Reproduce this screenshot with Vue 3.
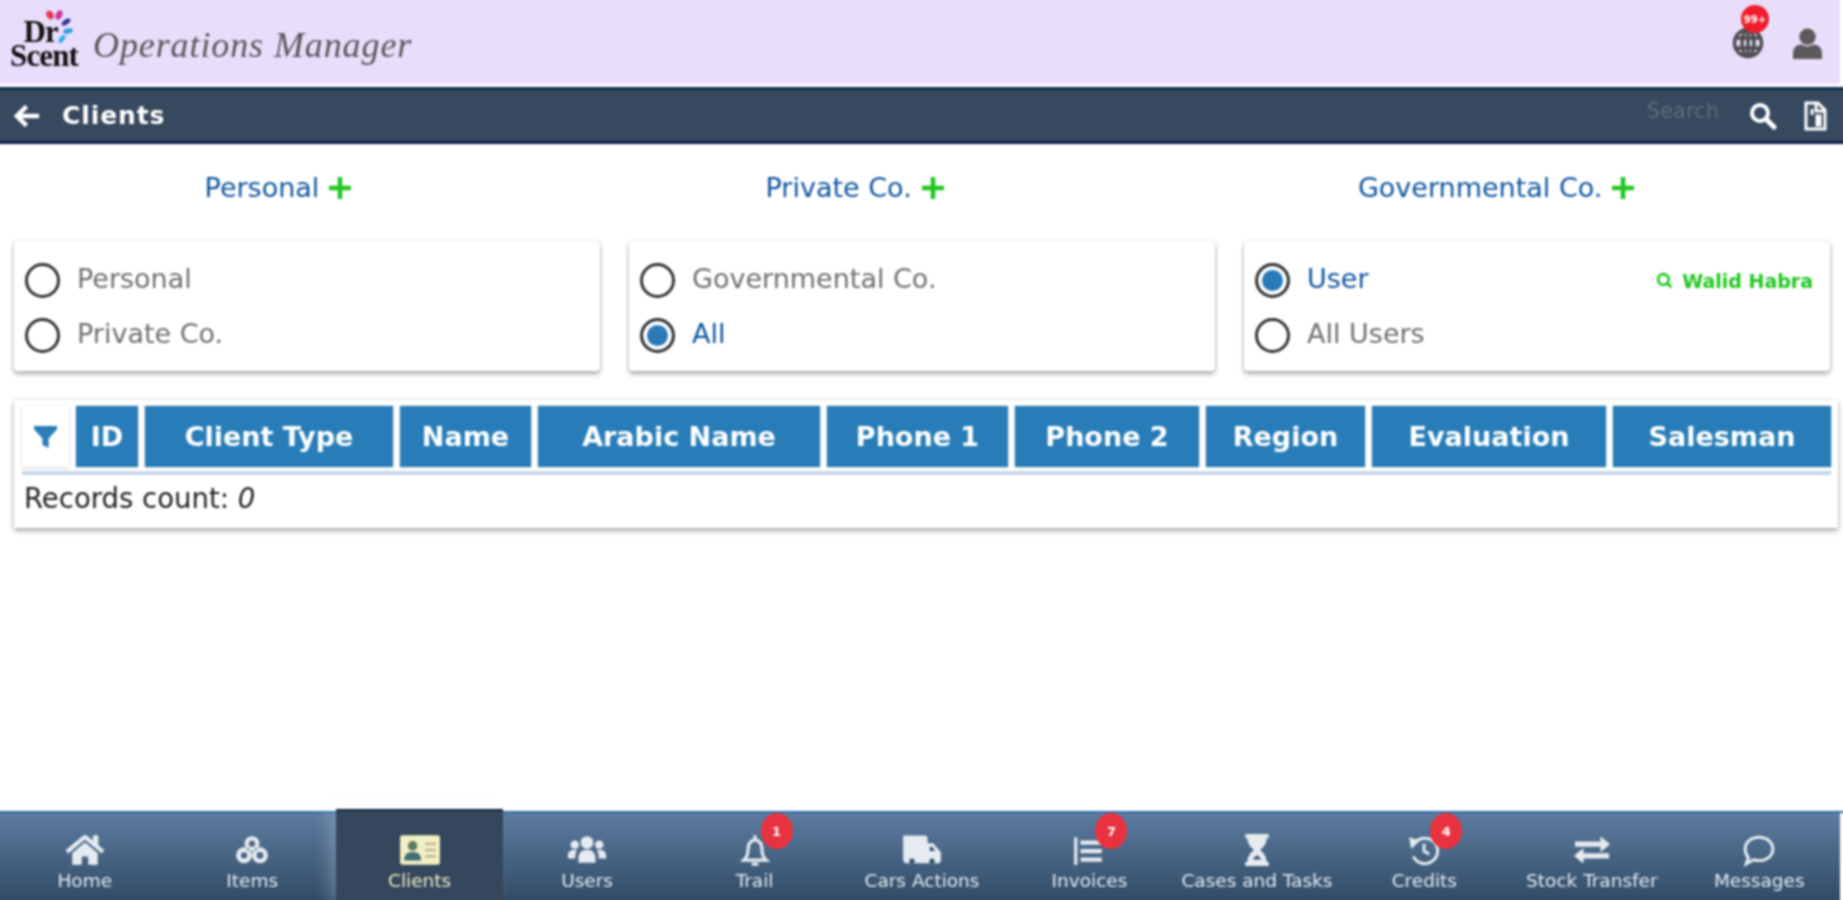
<script setup>
const titles = ['Personal', 'Private Co.', 'Governmental Co.']
const columns = ['ID', 'Client Type', 'Name', 'Arabic Name', 'Phone 1', 'Phone 2', 'Region', 'Evaluation', 'Salesman']
const circle = (x, y, r) => `M${x - r} ${y}a${r} ${r} 0 1 0 ${2 * r} 0a${r} ${r} 0 1 0 ${-2 * r} 0z`
const nav = [
  { label: 'Home', box: '0 0 576 512', d: 'M280.37 148.26L96 300.11V464a16 16 0 0 0 16 16l112.06-.29a16 16 0 0 0 15.92-16V368a16 16 0 0 1 16-16h64a16 16 0 0 1 16 16v95.64a16 16 0 0 0 16 16.05L464 480a16 16 0 0 0 16-16V300L295.67 148.26a12.19 12.19 0 0 0-15.3 0zM571.6 251.47L488 182.56V44.05a12 12 0 0 0-12-12h-56a12 12 0 0 0-12 12v72.61L318.47 43a48 48 0 0 0-61 0L4.34 251.47a12 12 0 0 0-1.6 16.9l25.5 31A12 12 0 0 0 45.15 301l235.22-193.74a12.19 12.19 0 0 1 15.3 0L530.9 301a12 12 0 0 0 16.9-1.6l25.5-31a12 12 0 0 0-1.7-16.93z' },
  { label: 'Items', box: '0 0 32 32', d: circle(16, 10, 7) + circle(16, 10, 3) + circle(8.5, 21, 7.5) + circle(8.5, 21, 3) + circle(23.5, 21, 7.5) + circle(23.5, 21, 3.2) },
  { label: 'Clients', card: true },
  { label: 'Users', box: '0 0 36 32', d: circle(18, 9, 6) + circle(6.5, 11, 4) + circle(29.5, 11, 4) + 'M10 28v-5c0-4 3-7 6-7h4c3 0 6 3 6 7v5zM0 22c0-4 2-6 5-6h4c-1 1-2 3-2 6v2H0zM36 22c0-4-2-6-5-6h-4c1 1 2 3 2 6v2h7z' },
  { label: 'Trail', box: '2 1 28 30', line: 'M6 25c2-2 4-4 4-11 0-4 3-7 6-7s6 3 6 7c0 7 2 9 4 11zM13 28.5h6M16 3v3', badge: '1' },
  { label: 'Cars Actions', box: '2 1 36 28', d: 'M3 2h19c2 0 3 1 3 3v4h5l7 8v7c0 2-1 3-3 3H7c-3 0-4-2-4-4z', dark: circle(11, 25, 2.4) + circle(29, 25, 2.4) + 'M27 12h2l3 4h-5z' },
  { label: 'Invoices', box: '0 0 32 32', d: 'M2 4h3v26H2zM8 7h20v4H8zM8 15h20v4H8zM8 23h20v4H8z', badge: '7' },
  { label: 'Cases and Tasks', box: '0 0 32 32', d: 'M5 1h22v4h-2c0 6-4 9-6 11 2 2 6 5 6 11h2v4H5v-4h2c0-6 4-9 6-11-2-2-6-5-6-11H5z', dark: 'M12 25c1-2 3-3 4-4 1 1 3 2 4 4z' },
  { label: 'Credits', box: '0 0 32 32', line: 'M7 10a12 12 0 1 1-1 12M16 10v7l5 3', d: 'M2 4l10 3-8 8z', badge: '4' },
  { label: 'Stock Transfer', box: '0 0 36 32', d: 'M2 8h24V3l9 7.5L26 18v-5H2zM34 19H10v-5l-9 7.5L10 29v-5h24z' },
  { label: 'Messages', box: '0 0 32 32', line: 'M16 4c7.5 0 13 4.6 13 11s-5.5 11-13 11c-1.800 0-3.500-.3-5-.8L4 29l2-6c-2-2-3-5-3-8C3 8.600 8.500 4 16 4z' }
]
</script>

<template>
  <div class="page">
    <header class="brand">
      <div class="logo">
        <svg class="petals" viewBox="0 0 30 34" aria-hidden="true">
          <ellipse cx="5" cy="6" rx="3.500" ry="4.500" fill="#e63950" transform="rotate(-30 5 6)" />
          <ellipse cx="14" cy="6" rx="3.200" ry="5" fill="#c9359b" transform="rotate(25 14 6)" />
          <ellipse cx="21" cy="13" rx="2.500" ry="5" fill="#35308f" transform="rotate(55 21 13)" />
          <ellipse cx="23" cy="22" rx="2.500" ry="5" fill="#2f9be0" transform="rotate(75 23 22)" />
          <ellipse cx="17" cy="30" rx="2.500" ry="4.500" fill="#2fb0e8" transform="rotate(40 17 30)" />
        </svg>
        <span class="logo-name">Dr&nbsp;<br />Scent</span>
      </div>
      <div class="app-name">Operations Manager</div>
      <div class="brand-icons">
        <div class="globe">
          <svg viewBox="0 0 32 32" class="globe-svg" aria-hidden="true">
            <g fill="none" stroke="#4d4d4d" stroke-width="3.500">
              <circle cx="16" cy="16" r="13.500" />
              <ellipse cx="16" cy="16" rx="6" ry="13.500" />
              <path d="M3 11h26M3 21h26M16 2v28" />
            </g>
          </svg>
          <span class="globe-badge">99+</span>
        </div>
        <svg viewBox="0 0 32 34" class="user-svg" aria-hidden="true">
          <circle cx="16" cy="10" r="8.500" fill="#5b5b5b" />
          <path d="M1 33v-6c0-6 4-9 9-9 2 1 4 2 6 2s4-1 6-2c5 0 9 3 9 9v6z" fill="#5b5b5b" />
        </svg>
      </div>
    </header>

    <div class="bar">
      <svg viewBox="0 0 28 24" class="back" aria-hidden="true">
        <path d="M13 2 3 12l10 10M4 12h22" fill="none" stroke="#fff" stroke-width="4.500" />
      </svg>
      <span class="bar-title">Clients</span>
      <span class="bar-search">Search</span>
      <svg viewBox="0 0 28 28" class="bar-icon" aria-hidden="true">
        <circle cx="11" cy="11" r="8" fill="none" stroke="#fff" stroke-width="4" />
        <path d="M17 17l8 8" stroke="#fff" stroke-width="5" stroke-linecap="round" />
      </svg>
      <svg viewBox="0 0 24 30" class="bar-doc" aria-hidden="true">
        <path d="M3 2h12l7 7v19H3z" fill="none" stroke="#fff" stroke-width="3" />
        <path d="M13 1v9h9M9 8v6M14 15h3v9h-3z" fill="none" stroke="#fff" stroke-width="3" />
      </svg>
    </div>

    <div class="titles">
      <div v-for="t in titles" :key="t" class="title">
        <span>{{ t }}</span>
        <svg viewBox="0 0 24 24" class="plus" aria-hidden="true">
          <path d="M12 1v22M1 12h22" stroke="#1fc61f" stroke-width="4.500" />
        </svg>
      </div>
    </div>

    <section class="filters">
      <div class="card">
        <div class="row"><span class="radio"></span><span class="opt">Personal</span></div>
        <div class="row"><span class="radio"></span><span class="opt">Private Co.</span></div>
      </div>
      <div class="card">
        <div class="row"><span class="radio"></span><span class="opt">Governmental Co.</span></div>
        <div class="row"><span class="radio on"></span><span class="opt sel">All</span></div>
      </div>
      <div class="card">
        <div class="row">
          <span class="radio on"></span><span class="opt sel">User</span>
          <span class="who">
            <svg viewBox="0 0 16 16" class="who-icon" aria-hidden="true">
              <circle cx="7" cy="7" r="5" fill="none" stroke="#1fc61f" stroke-width="2.500" />
              <path d="M10.500 10.500l4 4" stroke="#1fc61f" stroke-width="2.500" />
            </svg>
            Walid Habra
          </span>
        </div>
        <div class="row"><span class="radio"></span><span class="opt">All Users</span></div>
      </div>
    </section>

    <section class="table-card">
      <div class="thead">
        <div class="filter-cell">
          <svg viewBox="0 0 24 24" class="funnel" aria-hidden="true">
            <path d="M1 2h22v3l-8 9v9l-6-3v-6L1 5z" fill="#2a7db8" />
          </svg>
        </div>
        <div v-for="c in columns" :key="c" class="th">{{ c }}</div>
      </div>
      <div class="records">Records count: <em>0</em></div>
    </section>

    <nav class="tabs">
      <div v-for="n in nav" :key="n.label" class="tab" :class="{ active: n.card }">
        <div class="tab-icon">
          <svg v-if="n.card" viewBox="0 0 40 32" class="id-card" aria-hidden="true">
            <rect x="1" y="2" width="38" height="28" rx="2" fill="#f3efc4" />
            <circle cx="13" cy="12" r="4.500" fill="#5a7a62" />
            <path d="M5 26c0-6 3-8 8-8s8 2 8 8z" fill="#3f6f78" />
            <path d="M25 10h10M25 16h10M25 22h10" stroke="#b9b99a" stroke-width="2.500" />
          </svg>
          <svg v-else :viewBox="n.box" class="glyph" aria-hidden="true">
            <path v-if="n.d" :d="n.d" fill="#e6ebf1" fill-rule="evenodd" />
            <path v-if="n.dark" :d="n.dark" fill="#33506b" />
            <path v-if="n.line" :d="n.line" fill="none" stroke="#e6ebf1" stroke-width="2.800" />
          </svg>
          <span v-if="n.badge" class="badge">{{ n.badge }}</span>
        </div>
        <div class="tab-label">{{ n.label }}</div>
      </div>
    </nav>
  </div>
</template>

<style>
html, body { overflow: hidden; }
</style>

<style scoped>
/* The page reaches 3px past the window on every side so the soft focus does not fade at the edges. */
.page {
  height: 906px;
  width: 1849px;
  margin: -3px;
  display: flex;
  flex-direction: column;
  background: #fff;
  font-family: "DejaVu Sans", sans-serif;
  filter: blur(0.9px);
  overflow: hidden;
}
.brand {
  height: 87px;
  margin: 0 6px 3px 0;
  flex: none;
  box-sizing: border-box;
  display: flex;
  align-items: center;
  background: #e8defb;
  padding: 3px 0 0 12px;
}
.logo {
  position: relative;
  width: 70px;
  text-align: center;
  font-family: "Liberation Serif", serif;
  font-weight: 700;
  color: #111;
  padding-top: 4px;
}
.logo-name {
  display: block;
  font-size: 31px;
  line-height: 24px;
  letter-spacing: -0.900px;
}
.petals {
  position: absolute;
  left: 36px;
  top: -7px;
  width: 30px;
  height: 34px;
}
.app-name {
  margin: 6px 0 0 14px;
  font-family: "Liberation Serif", serif;
  font-style: italic;
  font-size: 36px;
  letter-spacing: 0.900px;
  color: #5a5557;
}
.brand-icons {
  margin-left: auto;
  display: flex;
  align-items: center;
  gap: 28px;
  padding: 0 17px 0 0;
}
.globe { position: relative; width: 32px; height: 32px; margin-top: 2px; }
.globe-svg { width: 32px; height: 32px; display: block; }
.globe-badge {
  position: absolute;
  left: 9px;
  top: -22px;
  width: 28px;
  height: 28px;
  border-radius: 50%;
  background: #ef1c2c;
  color: #fff;
  font-size: 10px;
  font-weight: 700;
  display: flex;
  align-items: center;
  justify-content: center;
}
.user-svg { width: 31px; height: 33px; display: block; margin-top: 2px; }
.bar {
  flex: none;
  height: 57px;
  box-sizing: border-box;
  display: flex;
  align-items: center;
  background: #37495e;
  border-top: 3px solid #0e2d50;
  border-bottom: 3px solid #0c2050;
  padding: 0 19px 0 17px;
}
.back { width: 27px; height: 24px; flex: none; }
.bar-title {
  margin-left: 21px;
  color: #fff;
  font-weight: 700;
  font-size: 25px;
  letter-spacing: 0.900px;
}
.bar-search {
  margin-left: auto;
  color: #5f6d7c;
  font-size: 21px;
  position: relative;
  top: -5px;
}
.bar-icon { width: 28px; height: 28px; margin-left: 30px; flex: none; }
.bar-doc { width: 24px; height: 30px; margin-left: 26px; flex: none; }
.titles {
  flex: none;
  height: 97px;
  box-sizing: border-box;
  padding: 26px 4px 0 1px;
  display: flex;
  justify-content: space-around;
  align-items: flex-start;
}
.title {
  display: flex;
  align-items: center;
  gap: 9px;
  font-size: 27px;
  line-height: 36px;
  color: #0f55a0;
}
.plus { width: 24px; height: 24px; }
.filters {
  flex: none;
  display: grid;
  grid-template-columns: repeat(3, 586px);
  gap: 29px;
  padding-left: 17px;
}
.card {
  height: 130px;
  box-sizing: border-box;
  padding: 12px 10px 0 11px;
  background: #fff;
  border-radius: 4px;
  box-shadow: 0 3px 5px rgba(0, 0, 0, 0.32), 0 0 3px rgba(0, 0, 0, 0.12);
}
.row {
  height: 55px;
  display: flex;
  align-items: center;
  gap: 17px;
}
.radio {
  width: 35px;
  height: 35px;
  box-sizing: border-box;
  flex: none;
  border: 3px solid #333;
  border-radius: 50%;
  background: #fff;
}
.radio.on { background: #2a7ab8; box-shadow: inset 0 0 0 4px #fff; }
.opt { font-size: 27px; color: #6f6f6f; position: relative; top: -2px; }
.opt.sel { color: #0f55a0; }
.who {
  margin-left: auto;
  display: flex;
  align-items: center;
  gap: 9px;
  color: #1fc61f;
  font-weight: 700;
  font-size: 19px;
  margin-right: 7px;
}
.who-icon { width: 17px; height: 17px; }
.table-card {
  flex: none;
  margin: 29px 8px 0 17px;
  height: 128px;
  box-sizing: border-box;
  padding: 6px 7px 0 8px;
  background: #fff;
  box-shadow: 0 3px 5px rgba(0, 0, 0, 0.32), 0 0 3px rgba(0, 0, 0, 0.12);
}
.thead {
  display: grid;
  grid-template-columns: 47px 62px 248px 131px 282px 181px 184px 159px 234px 218px;
  gap: 7px;
  height: 69px;
  border-bottom: 4px solid #c6d8e8;
  box-sizing: border-box;
  padding-bottom: 4px;
}
.filter-cell {
  display: flex;
  align-items: center;
  justify-content: center;
  box-shadow: 0 1px 3px rgba(0, 0, 0, 0.2);
}
.funnel { width: 25px; height: 25px; }
.th {
  background: #287db8;
  color: #fff;
  font-weight: 700;
  font-size: 27px;
  display: flex;
  align-items: center;
  justify-content: center;
  box-shadow: 0 0 2px rgba(0, 0, 0, 0.3);
}
.records {
  padding: 5px 0 0 2px;
  font-size: 27.500px;
  line-height: 36px;
  color: #222;
}
.tabs {
  margin-top: auto;
  flex: none;
  height: 92px;
  display: grid;
  grid-template-columns: repeat(11, 1fr);
  padding: 0 3px 3px 4px;
  background: linear-gradient(#5d7ca0, #2f4a63) no-repeat left top / calc(100% - 6px) 100%;
  border-top: 2px solid #2e6f9e;
  box-sizing: border-box;
}
.tab {
  position: relative;
  display: flex;
  flex-direction: column;
  align-items: center;
  color: #e6ebf1;
  padding-top: 19px;
}
.tab.active {
  background: #34475c;
  margin: -4px 0 -3px;
  padding-top: 21px;
  border-top: 2px solid #0e2545;
  box-shadow: -8px 0 14px rgba(220, 230, 240, 0.25);
  color: #f1edc8;
}
.tab-icon {
  position: relative;
  height: 36px;
  display: flex;
  align-items: center;
  justify-content: center;
}
.glyph { height: 34px; width: 40px; display: block; }
.id-card { width: 42px; height: 34px; display: block; }
.badge {
  position: absolute;
  left: 26px;
  top: -19px;
  width: 32px;
  height: 36px;
  border-radius: 50%;
  background: #e8323f;
  color: #fff;
  font-size: 13px;
  font-weight: 700;
  display: flex;
  align-items: center;
  justify-content: center;
}
.tab-label {
  margin-top: 2px;
  font-size: 18.500px;
  line-height: 22px;
  white-space: nowrap;
}
</style>
